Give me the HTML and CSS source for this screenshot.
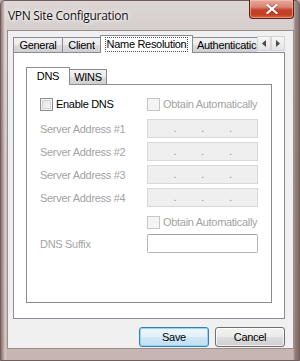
FILE: index.html
```html
<!DOCTYPE html>
<html>
<head>
<meta charset="utf-8">
<link rel="stylesheet" href="styles.css">
</head>
<body>
<div class="window">
  <div class="titlebar">
    <span class="title">VPN Site Configuration</span>
    <div class="close">
      <svg width="12" height="10" viewBox="0 0 12 10">
        <path d="M1.5 1 L10.5 9 M10.5 1 L1.5 9" stroke="#5a1a10" stroke-width="3.4" stroke-linecap="square" opacity="0.5"/>
        <path d="M1.5 1 L10.5 9 M10.5 1 L1.5 9" stroke="#ffffff" stroke-width="2.2" stroke-linecap="square"/>
      </svg>
    </div>
  </div>
  <div class="client">
    <div class="tabs">
      <div class="tabrow">
        <div class="tab t-general">General</div>
        <div class="tab t-client">Client</div>
        <div class="tab t-name active"><span class="focus">Name Resolution</span></div>
        <div class="tab t-auth">Authenticatic</div>
        <div class="arrows">
          <span class="arr"><svg width="4" height="7" viewBox="0 0 4 7"><polygon points="4,0 4,7 0,3.5" fill="#4a4a4a"/></svg></span>
          <span class="arr"><svg width="4" height="7" viewBox="0 0 4 7"><polygon points="0,0 0,7 4,3.5" fill="#4a4a4a"/></svg></span>
        </div>
      </div>
      <div class="panel">
        <div class="subrow">
          <div class="subtab active">DNS</div>
          <div class="subtab">WINS</div>
        </div>
        <div class="subpanel">
          <div class="row r-check">
            <label class="cell left"><span class="cb cb-on"></span><span class="lbl">Enable DNS</span></label>
            <label class="cell right dis"><span class="cb"></span><span class="lbl">Obtain Automatically</span></label>
          </div>
          <div class="row r-ip1">
            <span class="cell left dis">Server Address #1</span>
            <span class="ip"><i></i><b>.</b><i></i><b>.</b><i></i><b>.</b><i></i></span>
          </div>
          <div class="row r-ip">
            <span class="cell left dis">Server Address #2</span>
            <span class="ip"><i></i><b>.</b><i></i><b>.</b><i></i><b>.</b><i></i></span>
          </div>
          <div class="row r-ip">
            <span class="cell left dis">Server Address #3</span>
            <span class="ip"><i></i><b>.</b><i></i><b>.</b><i></i><b>.</b><i></i></span>
          </div>
          <div class="row r-ip">
            <span class="cell left dis">Server Address #4</span>
            <span class="ip"><i></i><b>.</b><i></i><b>.</b><i></i><b>.</b><i></i></span>
          </div>
          <div class="row r-check2">
            <span class="cell left"></span>
            <label class="cell right dis"><span class="cb"></span><span class="lbl">Obtain Automatically</span></label>
          </div>
          <div class="row r-suffix">
            <span class="cell left dis">DNS Suffix</span>
            <span class="text"></span>
          </div>
        </div>
      </div>
    </div>
    <div class="buttons">
      <button class="btn default">Save</button>
      <button class="btn">Cancel</button>
    </div>
  </div>
</div>
</body>
</html>
```

FILE: styles.css
```css
html, body {
  margin: 0;
  padding: 0;
  width: 300px;
  height: 361px;
  overflow: hidden;
  background: #b9a9a7;
}

.window {
  box-sizing: border-box;
  width: 300px;
  height: 361px;
  border: 1px solid #6f5e5c;
  border-radius: 5px 5px 0 0;
  padding: 0 5px 11px 6px;
  background:
    linear-gradient(to right, rgba(120,88,86,0.7) 0, rgba(120,88,86,0.35) 2px, rgba(255,255,255,0.25) 4px, rgba(255,255,255,0) 6px, rgba(255,255,255,0) 292px, rgba(105,78,74,0.55) 294px, rgba(105,78,74,0.75) 298px),
    linear-gradient(to bottom, #dcd6d5 0, #d6cecd 28px, #cdbfbe 160px, #c6b5b3 361px);
  display: flex;
  flex-direction: column;
  font-family: "Liberation Sans", Arial, sans-serif;
  font-size: 11px;
  letter-spacing: -0.3px;
  color: #000;
}

.titlebar {
  height: 29px;
  display: flex;
  align-items: flex-start;
  justify-content: space-between;
  flex-shrink: 0;
}

.title {
  font-family: "Open Sans", "Liberation Sans", sans-serif;
  font-size: 12px;
  letter-spacing: -0.3px;
  margin-top: 6px;
  margin-left: 1px;
  color: #111;
  text-shadow: 0 0 6px #fff, 0 0 3px #fff;
}

.close {
  width: 45px;
  height: 19px;
  margin-top: -1px;
  box-sizing: border-box;
  border: 1px solid #5c2016;
  border-top: none;
  border-radius: 0 0 4px 4px;
  background: linear-gradient(to bottom, #e7ab9d 0, #d98271 40%, #c4422a 55%, #c53d22 80%, #d56a3e 100%);
  box-shadow: inset 0 0 0 1px rgba(255,200,190,0.5);
  display: flex;
  align-items: center;
  justify-content: center;
}

.client {
  flex: 1;
  box-sizing: border-box;
  border: 1px solid #9a8e8d;
  background: #f0f0f0;
  padding: 4px 8px 0 5px;
  display: flex;
  flex-direction: column;
}

/* Outer tab control */
.tabrow {
  display: flex;
  align-items: flex-end;
  height: 18px;
  margin-bottom: -1px;
  position: relative;
  z-index: 1;
}

.tab {
  box-sizing: border-box;
  height: 16px;
  border: 1px solid #898c95;
  margin-left: -1px;
  background: linear-gradient(to bottom, #f2f2f2 0, #ebebeb 50%, #dddddd 51%, #cfcfcf 100%);
  text-align: center;
  line-height: 14px;
  white-space: nowrap;
  overflow: hidden;
}

.t-general { margin-left: 0; width: 50px; }
.t-client { width: 39px; }
.t-name { width: 93px; }
.t-auth { width: 65px; text-align: left; padding-left: 4px; border-right: none; }

.tab.active {
  height: 18px;
  border-bottom: none;
  background: #fff;
  line-height: 16px;
  position: relative;
  z-index: 2;
}

.focus {
  outline: 1px dotted #555;
  outline-offset: 0;
  padding: 0 1px 1px;
}

.arrows {
  display: flex;
  height: 16px;
  align-self: flex-end;
  margin-bottom: 1px;
}

.arr {
  box-sizing: border-box;
  width: 14px;
  height: 15px;
  border: 1px solid #d4d4d4;
  background: linear-gradient(to bottom, #f6f6f6, #e4e4e4);
  display: flex;
  align-items: center;
  justify-content: center;
}

.panel {
  box-sizing: border-box;
  width: 272px;
  height: 267px;
  border: 1px solid #898c95;
  background: #fff;
  padding: 14px 12px 15px 12px;
  display: flex;
  flex-direction: column;
}

/* Inner tab control */
.subrow {
  display: flex;
  align-items: flex-end;
  height: 18px;
  margin-bottom: -1px;
  position: relative;
  z-index: 1;
}

.subtab {
  box-sizing: border-box;
  height: 16px;
  border: 1px solid #898c95;
  margin-left: -1px;
  width: 38px;
  background: linear-gradient(to bottom, #f2f2f2 0, #ebebeb 50%, #dddddd 51%, #cfcfcf 100%);
  text-align: center;
  line-height: 15px;
}

.subtab.active {
  margin-left: 0;
  width: 44px;
  height: 18px;
  border-bottom: none;
  background: #fff;
  line-height: 16px;
  position: relative;
  z-index: 2;
}

.subpanel {
  flex: 1;
  border: 1px solid #898c95;
  background: #fff;
  padding: 13px 0 0 13px;
  display: flex;
  flex-direction: column;
}

.row {
  display: flex;
  align-items: center;
}

.r-check { height: 13px; }
.r-ip1 { margin-top: 8px; }
.r-ip { margin-top: 4px; }
.r-check2 { margin-top: 9px; height: 13px; }
.r-suffix { margin-top: 5px; }

.cell {
  display: flex;
  align-items: center;
  white-space: nowrap;
}

.left { width: 107px; }

.dis { color: #a3a3a3; }

.cb {
  box-sizing: border-box;
  width: 13px;
  height: 13px;
  border: 1px solid #c6c6c6;
  background: #f4f4f4;
  margin-right: 3px;
  flex-shrink: 0;
}

.cb-on {
  border-color: #8e8f8f;
  background: linear-gradient(135deg, #dcdcdc 0, #f0f0f0 60%, #fbfbfb 100%);
  box-shadow: inset 0 0 0 1px #f4f4f4, inset 0 0 0 2px #d5d5d5;
}

.lbl { line-height: 13px; }

.ip {
  box-sizing: border-box;
  width: 111px;
  height: 19px;
  border: 1px solid #d9d9d9;
  background: #efefef;
  display: flex;
  align-items: flex-end;
  padding-bottom: 3px;
  color: #8a8a8a;
  font-size: 10px;
  line-height: 10px;
}

.ip i { flex: 1; }
.ip b { font-weight: normal; }

.text {
  box-sizing: border-box;
  width: 111px;
  height: 19px;
  border: 1px solid #b6b6b6;
  border-top-color: #a6a6a6;
  border-radius: 2px;
  background: #fff;
}

/* Buttons */
.buttons {
  display: flex;
  justify-content: flex-end;
  gap: 6px;
  margin-top: 8px;
  padding-right: 0;
}

.btn {
  box-sizing: border-box;
  width: 70px;
  height: 20px;
  border: 1px solid #707070;
  border-radius: 3px;
  background: linear-gradient(to bottom, #f2f2f2 0, #ebebeb 48%, #dddddd 52%, #cfcfcf 100%);
  box-shadow: inset 0 0 0 1px rgba(255,255,255,0.7);
  font-family: "Liberation Sans", Arial, sans-serif;
  font-size: 11px;
  letter-spacing: -0.3px;
  color: #000;
  padding: 0;
  margin: 0;
}

.btn.default {
  border-color: #3c7fb1;
  background: linear-gradient(to bottom, #edf6fc 0, #e2f0f9 48%, #cfe7f6 52%, #c0dff2 100%);
  box-shadow: inset 0 0 0 1px #94d4f3;
}
```
